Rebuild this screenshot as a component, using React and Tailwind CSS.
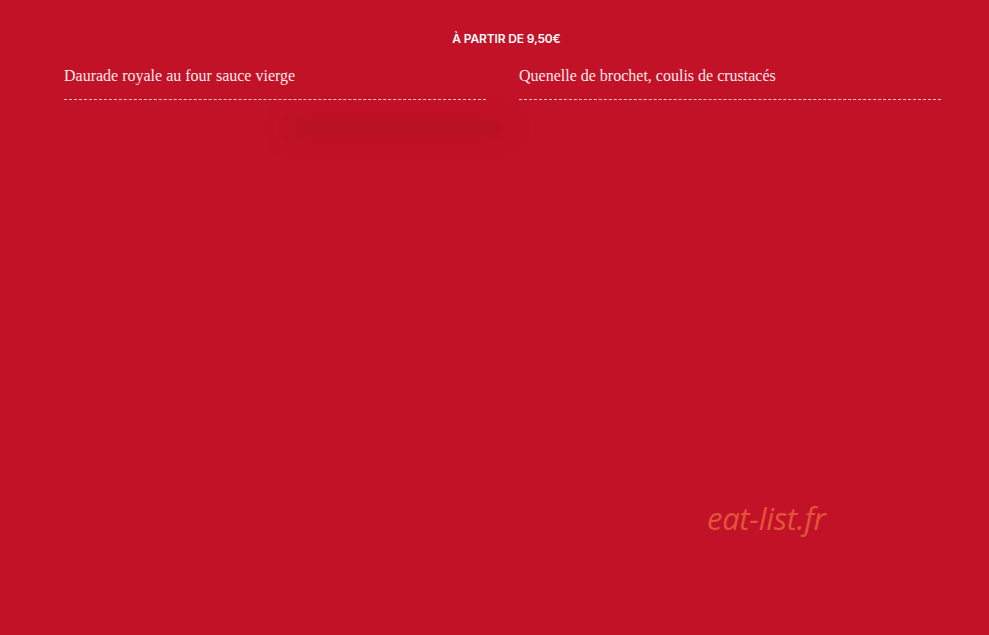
import React from 'react';

const dishes = [
  'Daurade royale au four sauce vierge',
  'Quenelle de brochet, coulis de crustacés',
];

const DishRow = ({ name }) => (
  <div className="border-b border-dashed border-[#f3c9cd] pb-[12px]">
    <span className="font-['Liberation_Serif',serif] text-[16px] leading-[22px] text-[#fbe9ea]">
      {name}
    </span>
  </div>
);

export default function App() {
  return (
    <div className="relative w-full h-[635px] overflow-hidden bg-[#c21227]">
      {/* soft shadow under the first column */}
      <div className="absolute left-[285px] top-[118px] w-[225px] h-[20px] rounded-full bg-[#a80f20]/40 blur-[10px]" />

      <div className="relative pl-[64px] pr-[48px] pt-[31px]">
        <p className="text-center font-['Inter',sans-serif] text-[12px] font-semibold leading-[16px] tracking-[-0.15px] text-white pl-[8px]">
          À PARTIR DE 9,50€
        </p>
        <div className="mt-[16px] grid grid-cols-2 gap-[33px]">
          {dishes.map((d) => (
            <DishRow key={d} name={d} />
          ))}
        </div>
      </div>

      <div className="absolute left-[707px] top-[498px] font-['Open_Sans',sans-serif] italic text-[31px] leading-[40px] tracking-[-0.3px] text-[#e2533a]">
        eat-list.fr
      </div>
    </div>
  );
}
